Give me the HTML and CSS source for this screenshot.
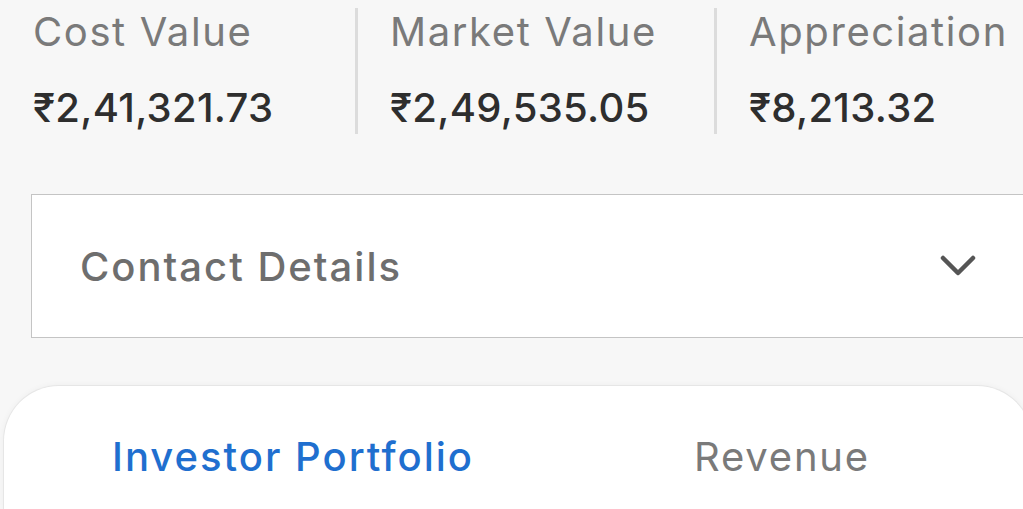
FILE: index.html
```html
<!DOCTYPE html>
<html lang="en">
<head>
  <title>Portfolio Summary</title>
  <link rel="stylesheet" href="styles.css">
</head>
<body>
  <div class="page">
    <div class="stats">
      <div class="stat">
        <p class="stat-label">Cost Value</p>
        <p class="stat-value">₹2,41,321.73</p>
      </div>
      <div class="stat">
        <p class="stat-label">Market Value</p>
        <p class="stat-value">₹2,49,535.05</p>
      </div>
      <div class="stat">
        <p class="stat-label">Appreciation</p>
        <p class="stat-value">₹8,213.32</p>
      </div>
    </div>

    <div class="accordion">
      <span class="accordion-title">Contact Details</span>
      <svg class="chevron" width="36" height="22" viewBox="0 0 36 22">
        <path d="M3 3 L18 18 L33 3" fill="none" stroke="#555" stroke-width="4.5" stroke-linecap="round" stroke-linejoin="round"/>
      </svg>
    </div>

    <div class="card">
      <div class="tabs">
        <span class="tab active">Investor Portfolio</span>
        <span class="tab">Revenue</span>
      </div>
    </div>
  </div>
</body>
</html>
```

FILE: styles.css
```css
body {
  margin: 0;
  padding: 0;
  background-color: #f7f7f7;
  font-family: Inter, "Noto Sans", "DejaVu Sans", sans-serif;
  overflow: hidden;
  height: 509px;
}

.page {
  width: 1100px;
}

p {
  margin: 0;
}

.stats {
  display: flex;
  padding-top: 8px;
}

.stat {
  flex-shrink: 0;
  width: 359px;
  box-sizing: border-box;
  padding-left: 32px;
  padding-bottom: 2px;
}

.stat:first-child {
  width: 355px;
  padding-left: 33px;
}

.stat + .stat {
  border-left: 3px solid #dcdcdc;
}

.stat-label {
  font-size: 40px;
  line-height: 48px;
  color: #7a7a7a;
  letter-spacing: 1.6px;
}

.stat-value {
  margin-top: 28px;
  font-size: 40px;
  line-height: 48px;
  font-weight: 500;
  color: #2e2e2e;
  letter-spacing: 0.3px;
}

.accordion {
  margin: 60px 0 0 31px;
  width: 1010px;
  height: 144px;
  box-sizing: border-box;
  border: 1px solid #c4c4c4;
  background: #fff;
  display: flex;
  align-items: center;
  justify-content: space-between;
  padding: 0 64px 0 48px;
}

.accordion-title {
  font-size: 40px;
  font-weight: 500;
  color: #6e6e6e;
  letter-spacing: 2px;
}

.chevron {
  display: block;
}

.card {
  margin: 47px 0 0 3px;
  width: 1030px;
  height: 124px;
  background: #fff;
  border: 1px solid #e6e6e6;
  border-bottom: none;
  border-radius: 56px 56px 0 0;
  box-shadow: 0 0 6px rgba(0, 0, 0, 0.04);
  padding-top: 47px;
  box-sizing: border-box;
}

.tabs {
  display: grid;
  grid-template-columns: 582px auto;
  padding-left: 108px;
}

.tab {
  font-size: 40px;
  line-height: 48px;
  color: #7a7a7a;
  letter-spacing: 1.8px;
}

.tab.active {
  color: #1f6fcf;
  font-weight: 500;
  letter-spacing: 2px;
}
```
